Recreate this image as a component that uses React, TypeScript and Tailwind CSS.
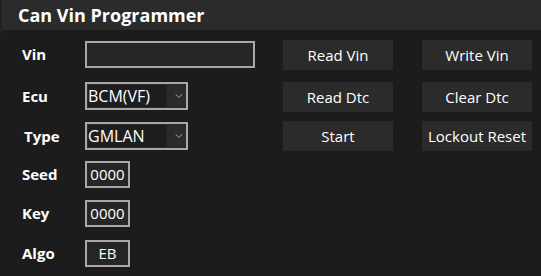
import { ChevronDown } from "lucide-react";

const Field = ({
  label,
  children,
  className = "",
  indent = false,
}: {
  label: string;
  children: React.ReactNode;
  className?: string;
  indent?: boolean;
}) => (
  <div className={`flex items-center ${className}`}>
    <span className={`w-[63px] shrink-0 text-[15px] font-bold text-white ${indent ? "pl-[2px]" : ""}`}>{label}</span>
    {children}
  </div>
);

const SmallBox = ({ value }: { value: string }) => (
  <div className="flex h-[27px] w-[45px] items-center justify-center border-2 border-[#a8a8a8] bg-[#262626] text-[15px] text-white">
    {value}
  </div>
);

const Select = ({ value }: { value: string }) => (
  <div className="flex h-[28px] w-[103px] items-center border-2 border-[#a8a8a8] bg-[#2b2b2b] p-px">
    <div className="flex h-full w-[81px] items-center bg-[#1e1e1e] text-[16px] leading-none text-white">{value}</div>
    <ChevronDown className="ml-[6px] h-3 w-3 text-[#d0d0d0]" strokeWidth={1.5} />
  </div>
);

const Btn = ({ children }: { children: React.ReactNode }) => (
  <button className="flex h-[30px] w-[110px] items-center justify-center bg-[#2b2b2b] text-[15px] text-white">
    {children}
  </button>
);

export default function App() {
  return (
    <div className="relative h-[276px] w-[541px] overflow-hidden bg-[#1c1c1c] font-['Open_Sans','Noto_Sans',sans-serif]">
      {/* title bar */}
      <div className="h-[30px] bg-[#2b2b2b] pl-[18px] text-[18px] font-bold leading-[30px] text-white">
        Can Vin Programmer
      </div>
      <div className="absolute left-0 top-0 h-[34px] w-[2px] bg-[#1f2122]" />

      <div className="flex pt-[10px]">
        <div className="flex w-[283px] flex-col pl-[22px]">
          <Field label="Vin" className="mt-px">
            <div className="h-[27px] w-[170px] border-2 border-[#a8a8a8] bg-[#262626]" />
          </Field>
          <Field label="Ecu" className="mt-[14px]">
            <Select value="BCM(VF)" />
          </Field>
          <Field label="Type" className="mt-[12px]" indent>
            <Select value="GMLAN" />
          </Field>
          <Field label="Seed" className="mt-[11px]">
            <SmallBox value="0000" />
          </Field>
          <Field label="Key" className="mt-[12px]">
            <SmallBox value="0000" />
          </Field>
          <Field label="Algo" className="mt-[13px]">
            <SmallBox value="EB" />
          </Field>
        </div>

        <div className="grid grid-cols-[110px_110px] gap-x-[29px] self-start">
          <Btn>Read Vin</Btn>
          <Btn>Write Vin</Btn>
          <div className="col-span-2 h-[12px]" />
          <Btn>Read Dtc</Btn>
          <Btn>Clear Dtc</Btn>
          <div className="col-span-2 h-[9px]" />
          <Btn>Start</Btn>
          <Btn>Lockout Reset</Btn>
        </div>
      </div>
    </div>
  );
}
